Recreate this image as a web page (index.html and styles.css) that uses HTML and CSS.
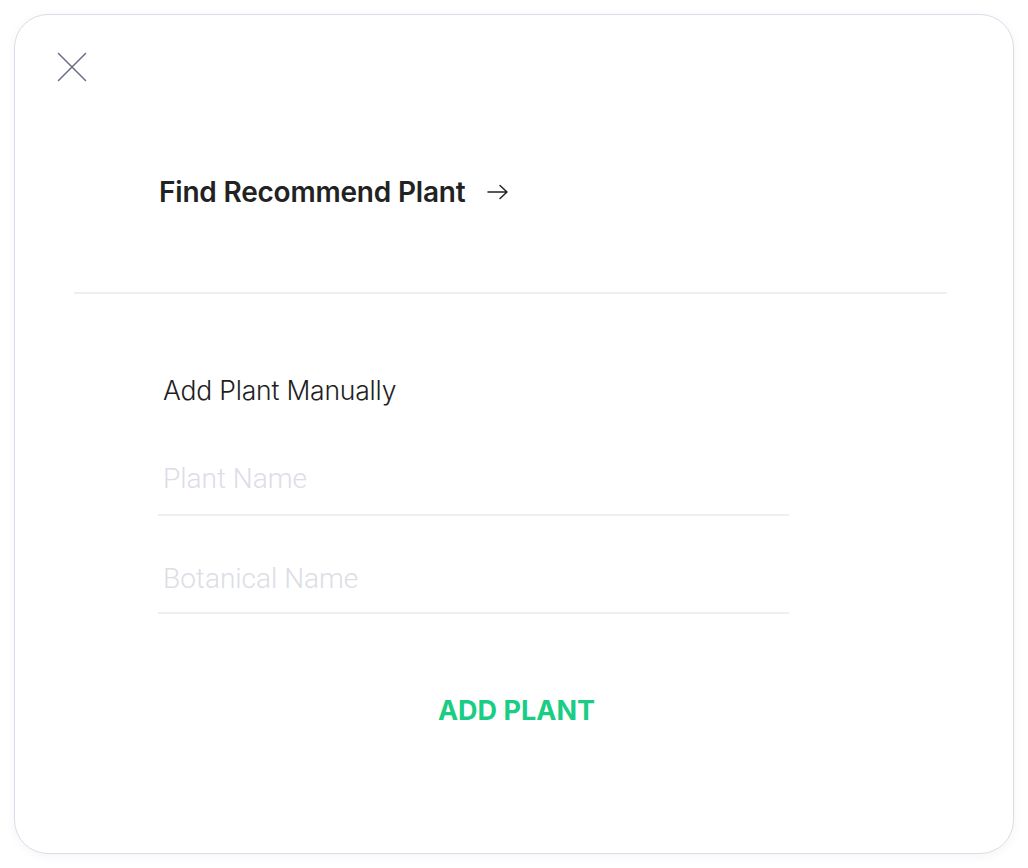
FILE: index.html
```html
<!DOCTYPE html>
<html>
<head>
<meta charset="utf-8">
<link rel="stylesheet" href="styles.css">
</head>
<body>
<div class="card">
  <button class="close" aria-label="Close">
    <svg width="30" height="30" viewBox="0 0 30 30"><path d="M1.5 1.5 L28.5 28.5 M28.5 1.5 L1.5 28.5" stroke="#6b6c84" stroke-width="1.5" fill="none" stroke-linecap="round"/></svg>
  </button>
  <div class="find">
    <span class="find-text">Find Recommend Plant</span>
    <svg class="arrow" width="22" height="16" viewBox="0 0 22 16"><path d="M1 8 H20 M13 1.5 L20 8 L13 14.5" stroke="#222" stroke-width="1.5" fill="none" stroke-linecap="round" stroke-linejoin="round"/></svg>
  </div>
  <div class="divider"></div>
  <div class="manual">
    <h2 class="manual-title">Add Plant Manually</h2>
    <div class="field field-first"><input type="text" placeholder="Plant Name"></div>
    <div class="field field-second"><input type="text" placeholder="Botanical Name"></div>
  </div>
  <div class="actions"><button class="add">ADD PLANT</button></div>
</div>
</body>
</html>
```
FILE: styles.css
```css
* { box-sizing: border-box; }
html, body { margin: 0; padding: 0; background: #fff; }
body { padding: 14px 14px 14px 14px; font-family: Inter, "Noto Sans", sans-serif; }
.card {
  width: 1000px;
  height: 840px;
  border: 1px solid #dddbea;
  border-radius: 34px;
  background: #fff;
  box-shadow: 0 2px 10px rgba(60, 60, 90, 0.06);
  position: relative;
  padding: 37px 0 0 0;
}
.close {
  display: block;
  margin-left: 42px;
  padding: 0;
  border: 0;
  background: none;
  width: 30px;
  height: 30px;
}
.find {
  display: flex;
  align-items: center;
  margin: 94px 0 0 144px;
  height: 32px;
}
.find-text {
  font-size: 28px;
  font-weight: 600;
  color: #222;
  letter-spacing: -0.2px;
}
.arrow { margin-left: 22px; }
.divider {
  height: 2px;
  background: #efefef;
  margin: 84px 66px 0 59px;
}
.manual { margin: 80px 0 0 143px; width: 631px; }
.manual-title {
  margin: 0 0 0 5px;
  font-size: 26.5px;
  font-weight: 300;
  color: #1e1e1e;
  letter-spacing: -0.2px;
  line-height: 32px;
}
.field {
  border-bottom: 2px solid #efefef;
  display: flex;
  align-items: flex-end;
}
.field-first { height: 110px; padding-bottom: 19px; }
.field-second { height: 98px; padding-bottom: 17px; }
.field input {
  border: 0;
  outline: none;
  padding: 0 0 0 5px;
  width: 100%;
  font-family: Roboto, sans-serif;
  font-size: 28px;
  font-weight: 300;
  color: #333;
  background: transparent;
}
.field input::placeholder { color: #dcdde6; }
.actions { display: flex; justify-content: center; margin-top: 80px; padding-left: 5px; }
.add {
  border: 0;
  background: none;
  font-family: Inter, sans-serif;
  font-size: 27px;
  font-weight: 700;
  color: #19cd84;
  letter-spacing: 0;
  padding: 0;
}
```
